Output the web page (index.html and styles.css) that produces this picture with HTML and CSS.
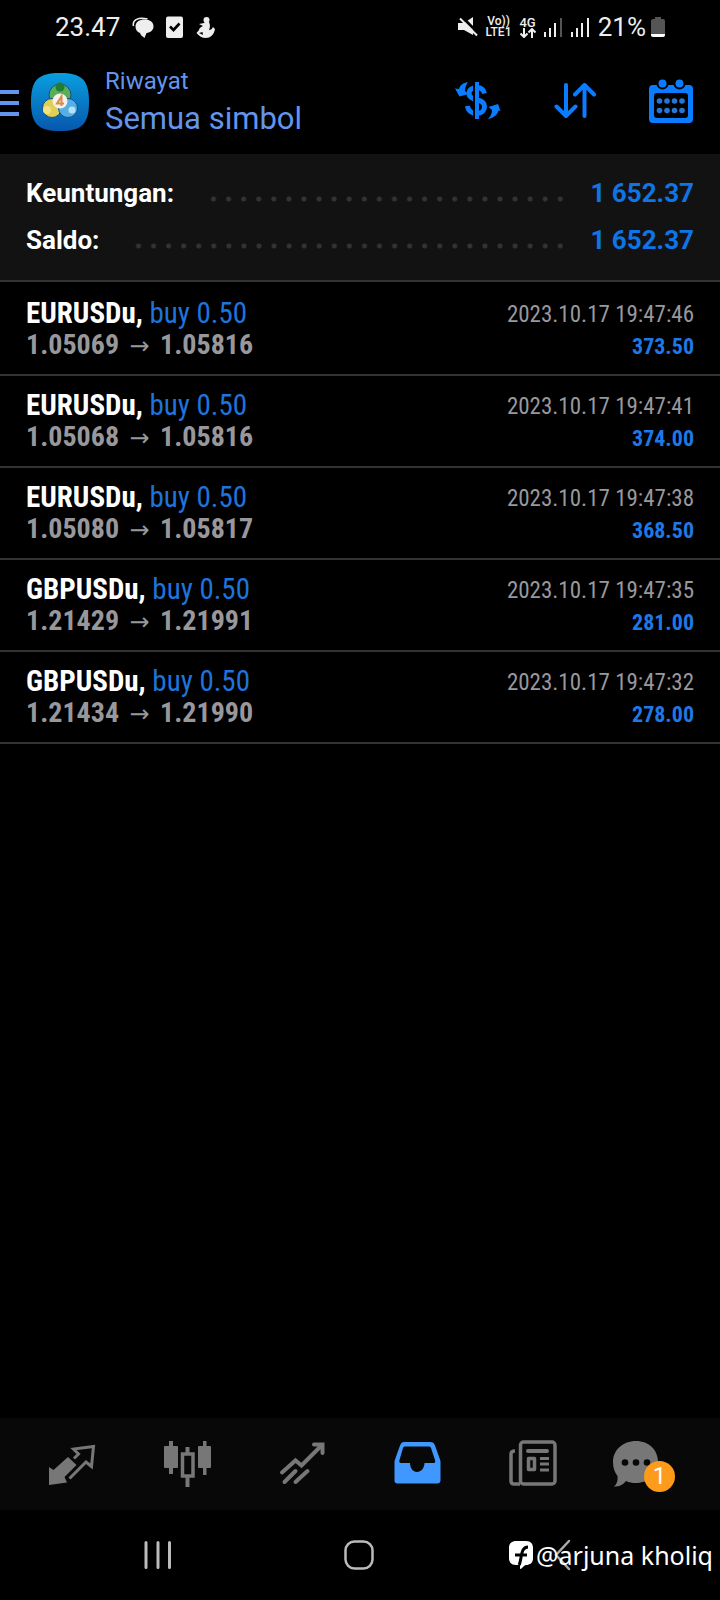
FILE: index.html
```html
<!DOCTYPE html>
<html lang="id">
<head>
<meta charset="utf-8">
<meta name="viewport" content="width=device-width, initial-scale=1">
<title>Riwayat</title>
<link rel="stylesheet" href="styles.css">
</head>
<body>
<div class="screen">
  <div class="status">
    <span class="clock">23.47</span>
    <svg class="status-left" width="84" height="24" viewBox="132 14 84 24" fill="#eee">
      <path d="M144.500 18.500c6 0 9 3 9 7 0 3.500-3 6-7 6.500l-2 5c-2-1.500-4-3-4.500-5-3-1-4.500-3.500-4.500-6.500 0-4.500 4-7 9-7z"/>
      <path d="M133.500 25c-1.500-6 5-9.500 14-7" fill="none" stroke="#eee" stroke-width="1.500"/>
      <rect x="166" y="15.500" width="17" height="21.500" rx="2"/>
      <path d="M170 25.500l3.500 3.500 6-6.500" fill="none" stroke="#000" stroke-width="2.600"/>
      <circle cx="206.500" cy="19" r="3"/>
      <path d="M199 23l5-1 1-1h4c1.500 3 1 6 0 8 2 0 3-1 4-3l2 2c-1 6-5 9-9 9-4 0-7-2-9.500-5l2.500-3c0-2 2-3 4-4z"/>
      <path d="M199 32l3.500-1 .5 3z" fill="#000"/>
    </svg>
    <span class="grow"></span>
    <svg width="20" height="20" viewBox="458 16 20 20" fill="#eee"><path d="M458 22h6l9-6v18l-9-5h-6z"/><path d="M461 15l18 18" stroke="#000" stroke-width="3"/><path d="M460 17.500l17 17" stroke="#eee" stroke-width="2"/></svg>
    <span class="net"><span>Vo))</span><span>LTE1</span></span>
    <span class="net"><span class="gen">4G</span>
      <svg width="16" height="10" viewBox="0 0 16 10" fill="none" stroke="#eee" stroke-width="2"><path d="M4 0v9M.500 5.500L4 9l3.500-3.500M12 10V1M8.500 4.500L12 1l3.500 3.500"/></svg></span>
    <svg width="46" height="20" viewBox="0 0 46 20" stroke="#eee" stroke-width="2"><path d="M1 15v5M6 11v9M11 6v14M28 15v5M33 11v9M38 6v14M44 1v19"/><path d="M17 1v19" stroke="#555"/></svg>
    <span class="battery"><span>21%</span>
      <svg width="14" height="20" viewBox="0 0 14 20"><path d="M4 0h6v2h2q2 0 2 2v13H0V4q0-2 2-2h2z" fill="#555"/><path d="M0 17h14v1q0 2-2 2H2q-2 0-2-2z" fill="#fff"/></svg></span>
  </div>

  <header class="header">
    <button class="menu" aria-label="Menu"><svg width="19" height="28" viewBox="0 0 19 28" fill="#6495ed"><path d="M0 1h19v4H0zM0 12h19v4H0zM0 23h19v4H0z"/></svg></button>
    <svg class="logo" width="60" height="60" viewBox="0 0 60 60">
      <defs>
        <linearGradient id="bg" x1="0" y1="0" x2="0" y2="1"><stop offset="0" stop-color="#0a9fe0"/><stop offset="1" stop-color="#0657ad"/></linearGradient>
      </defs>
      <path d="M30 1C52 1 59 8 59 30S52 59 30 59 1 52 1 30 8 1 30 1z" fill="url(#bg)"/>
      <g stroke="#17507c" stroke-width="1">
        <circle cx="30" cy="23" r="11" fill="#58ad58"/>
        <circle cx="22" cy="36" r="9.500" fill="#e0d055"/>
        <circle cx="38" cy="36" r="9.500" fill="#55aee6"/>
      </g>
      <circle cx="30" cy="15" r="4.500" fill="#237c35"/><circle cx="17" cy="38" r="4" fill="#f0e382"/><circle cx="42" cy="38" r="3.500" fill="#b4e2fb"/>
      <circle cx="30" cy="29" r="7.500" fill="#f5f2ea"/>
      <path d="M31.500 34v-9.500l-4.500 7h7" fill="none" stroke="#dc8a4e" stroke-width="2"/>
    </svg>
    <div class="titles"><h1 class="section">Riwayat</h1><p class="symbol">Semua simbol</p></div>
    <div class="actions">
      <button aria-label="Mata uang"><svg width="46" height="40" viewBox="455 82 46 40">
        <path d="M484.500 94.500c-1-4-4-6-7.500-6-5 0-8 2.500-8 6 0 4 4 5.500 8.500 6.500 5 1 7 3 7 6.500 0 4-3 7-7.500 7-5 0-9-3-9.500-7.500" fill="none" stroke="#0a7cff" stroke-width="5"/>
        <path d="M474 82v39" stroke="#000" stroke-width="2"/>
        <path d="M475 83h4v37h-4z" fill="#0a7cff"/>
        <path d="M468 83c-5 1-8 3-9 7l-4-.5 4.500 8 9-2.500-3.500-3c0-3 1-6 3-9zM488 120c6-1 10-5 10.500-8.500l2 .5-2.500-7-9.500 3 3.500 3c0 3-1 6-4 9z" fill="#0a7cff"/></svg></button>
      <button aria-label="Urutkan"><svg width="42" height="36" viewBox="0 0 42 36" fill="none" stroke="#0a7cff" stroke-width="4" stroke-linecap="round" stroke-linejoin="round"><path d="M12 2v31M2.500 23.500L12 33l9.500-9.500M30.500 33V2M21 11.500L30.500 2 40 11.500"/></svg></button>
      <button aria-label="Kalender"><svg width="44" height="44" viewBox="0 0 44 44"><rect y="6" width="44" height="38" rx="4" fill="#0a7cff"/><rect x="5" y="14" width="34" height="25" rx="3" fill="#000"/><g fill="#0a7cff" stroke="#000" stroke-width="2"><circle cx="13.500" cy="4.500" r="5"/><circle cx="30.500" cy="4.500" r="5"/></g><g fill="#2477d8"><circle cx="10.500" cy="22" r="2.800"/><circle cx="18" cy="22" r="2.800"/><circle cx="25.500" cy="22" r="2.800"/><circle cx="33" cy="22" r="2.800"/><circle cx="10.500" cy="31.500" r="2.800"/><circle cx="18" cy="31.500" r="2.800"/><circle cx="25.500" cy="31.500" r="2.800"/><circle cx="33" cy="31.500" r="2.800"/></g></svg></button>
    </div>
  </header>

  <main class="content">
    <dl class="summary">
      <div class="total"><dt>Keuntungan:</dt><dd><span class="leader"></span>1 652.37</dd></div>
      <div class="total"><dt>Saldo:</dt><dd><span class="leader"></span>1 652.37</dd></div>
    </dl>
    <ul class="deals">
      <li class="deal"><div><p class="name"><b>EURUSDu,</b> <span>buy 0.50</span></p><p class="price">1.05069 <span class="arrow">→</span> 1.05816</p></div><div class="result"><time>2023.10.17 19:47:46</time><p class="profit">373.50</p></div></li>
      <li class="deal"><div><p class="name"><b>EURUSDu,</b> <span>buy 0.50</span></p><p class="price">1.05068 <span class="arrow">→</span> 1.05816</p></div><div class="result"><time>2023.10.17 19:47:41</time><p class="profit">374.00</p></div></li>
      <li class="deal"><div><p class="name"><b>EURUSDu,</b> <span>buy 0.50</span></p><p class="price">1.05080 <span class="arrow">→</span> 1.05817</p></div><div class="result"><time>2023.10.17 19:47:38</time><p class="profit">368.50</p></div></li>
      <li class="deal"><div><p class="name"><b>GBPUSDu,</b> <span>buy 0.50</span></p><p class="price">1.21429 <span class="arrow">→</span> 1.21991</p></div><div class="result"><time>2023.10.17 19:47:35</time><p class="profit">281.00</p></div></li>
      <li class="deal"><div><p class="name"><b>GBPUSDu,</b> <span>buy 0.50</span></p><p class="price">1.21434 <span class="arrow">→</span> 1.21990</p></div><div class="result"><time>2023.10.17 19:47:32</time><p class="profit">278.00</p></div></li>
    </ul>
  </main>

  <nav class="tabs">
    <button aria-label="Kuotasi"><svg width="48" height="48" viewBox="49 1439 48 48"><path d="M69 1456l8.500 8-12 12 2.500 5.500-18 2.500v-18l4.500 3z" fill="#777"/><path d="M75 1457.500l4.500-4.500-5-5 20-2.500-2 20-5.500-4.500-16.500 16.500" fill="none" stroke="#777" stroke-width="3"/></svg></button>
    <button aria-label="Grafik"><svg width="48" height="48" viewBox="163 1440 48 48" fill="#777"><rect x="164" y="1446" width="14" height="22" rx="1"/><rect x="198" y="1446" width="13" height="22" rx="1"/><path d="M169 1441h4v33h-4zM203 1441h3.500v34H203zM185.500 1447h4v7h-4zM185.500 1476h4v11h-4z"/><rect x="182.500" y="1454" width="10.500" height="22" fill="none" stroke="#777" stroke-width="3.500"/></svg></button>
    <button aria-label="Trading"><svg width="48" height="48" viewBox="278 1440 48 48" fill="none" stroke="#777" stroke-width="4" stroke-linecap="round"><path d="M282 1472.500l13.500-12 6 5 20-20M284.500 1482l11-11M295.500 1482l12-11"/><path d="M314 1444.500h8.500v8.500"/></svg></button>
    <button aria-label="Riwayat" aria-current="page"><svg width="48" height="48" viewBox="394 1440 48 48" fill="#3f97ff" fill-rule="evenodd"><path d="M404 1442h26c3 0 4 1 5 3.500l5 14c.5 1 .5 2 .5 3v18c0 2-1.500 3-3 3h-40c-2 0-3-1-3-3v-18c0-1 0-2 .5-3l5-14c1-2.500 2-3.500 4-3.500zM405 1446.500c-1 0-1.500.5-2 1.500l-3.500 12c-.5 2 0 3 1.500 3h9c0 5 3 9 7 9s7.500-4 7.500-9h9c2 0 2-1 1.500-3l-4-12c-.5-1-1-1.500-2-1.500z"/></svg></button>
    <button aria-label="Berita"><svg width="48" height="48" viewBox="509 1440 48 48" fill="none" stroke="#777" stroke-width="3.500" stroke-linejoin="round"><rect x="520.500" y="1442" width="34.500" height="42" rx="3"/><path d="M520 1484h-6c-2 0-3-1-3-3v-27c0-2 1.500-3 4-3"/><path d="M528 1451h19" stroke-width="4" stroke-linecap="round"/><rect x="528.500" y="1458.500" width="6" height="11"/><path d="M540 1458.500h9M540 1464h9M540 1470h9" stroke-width="3"/></svg></button>
    <button class="chat" aria-label="Pesan"><svg width="48" height="48" viewBox="612 1439 48 48"><path d="M636 1440c13 0 22 9 22 21s-9 21-22 21c-4 0-7-.5-10-2-3 4-8 6-12 5.500 3-2.500 4-6 3.500-10.500-3-4-4.500-8-4.500-14 0-12 10-21 23-21z" fill="#777"/><g fill="#080808"><circle cx="625" cy="1461.500" r="3.300"/><circle cx="636" cy="1461.500" r="3.300"/><circle cx="647" cy="1461.500" r="3.300"/></g></svg><span class="badge">1</span></button>
  </nav>

  <div class="system">
    <button aria-label="Terbaru"><svg width="28" height="30" viewBox="0 0 28 30" stroke="#bbb" stroke-width="3" stroke-linecap="round"><path d="M2 2.500v25M14 2.500v25M25.500 2.500v25"/></svg></button>
    <button aria-label="Beranda"><svg width="30" height="30" viewBox="0 0 30 30" fill="none" stroke="#bbb" stroke-width="2.500"><rect x="1.500" y="1.500" width="27" height="27" rx="9"/></svg></button>
    <button aria-label="Kembali"><svg width="30" height="32" viewBox="0 0 30 32" fill="none" stroke="#aaa" stroke-width="2.500" stroke-linecap="round"><path d="M23 2L10 16l13 14"/></svg></button>
    <div class="credit"><svg width="26" height="30" viewBox="0 0 26 30"><path d="M8 1h10c5 0 7 3 7 7v10c0 5-3 7-7 7-2 0-4 4-6 4v-4H8c-5 0-7-3-7-7V8c0-5 3-7 7-7z" fill="#fff"/><path d="M11 25c3-5 1-18 9-18M7 15h12" fill="none" stroke="#000" stroke-width="3"/></svg><span>@arjuna kholiq</span></div>
  </div>
</div>
</body>
</html>
```
FILE: styles.css
```css
* { box-sizing: border-box; }
body { margin: 0; background: #000; color: #fff; font-family: Roboto, "Liberation Sans", sans-serif; }
button { padding: 0; border: 0; background: none; color: inherit; font: inherit; display: flex; }
svg { display: block; flex: none; }
p, h1, dl, dd, ul { margin: 0; padding: 0; font-weight: 400; }
.screen { min-height: 100vh; display: flex; flex-direction: column; }

.status { height: 54px; padding: 0 55px; display: flex; align-items: center; gap: 8px; color: #eee; font-size: 26px; }
.status-left { margin-left: 4px; }
.grow { flex: 1; }
.net { display: flex; flex-direction: column; align-items: center; font-size: 12px; line-height: 11px; font-weight: 500; }
.gen { font-size: 13px; }
.battery { display: flex; align-items: center; gap: 5px; }

.header { height: 100px; padding-right: 27px; display: flex; align-items: center; color: #6495ed; }
.logo { margin: 0 15px 5px 11px; }
.menu { margin-bottom: 3px; }
.titles { margin-bottom: 6px; }
.section { font-size: 24px; line-height: 36px; }
.symbol { font-size: 31px; line-height: 40px; }
.actions { margin: 0 0 6px auto; display: flex; align-items: center; gap: 53px; }

.content { flex: 1; }
.summary { padding: 16px 26px; background: #121212; border-bottom: 2px solid #333; font-size: 26px; line-height: 47px; font-weight: 700; }
.total { display: flex; }
.total dd { flex: 1; display: flex; color: #0f75e6; font-weight: 700; }
.leader { flex: 1; height: 6px; margin: 26px 22px 0 32px; background: radial-gradient(circle, #333 2px, transparent 3px) 0 0 / 15px 6px; background-repeat: space no-repeat; }

.deals { padding-top: 2px; list-style: none; font-family: "Roboto Condensed", Roboto, sans-serif; }
.deal { padding: 13px 26px 11px; display: flex; justify-content: space-between; border-bottom: 2px solid #333; line-height: 32px; }
.name { font-size: 29px; }
.name span { color: #1e74dc; }
.price { color: #98989c; font-size: 28px; font-weight: 700; }
.arrow { margin: 0 4px; font-family: "DejaVu Sans", sans-serif; font-size: 24px; font-weight: 400; line-height: 24px; }
.result { padding-top: 2px; display: flex; flex-direction: column; text-align: right; font-size: 22px; }
.result time { color: #98989c; font-size: 23px; }
.profit { color: #1e78e6; font-weight: 700; }

.tabs { height: 92px; padding: 0 48px; display: flex; align-items: center; justify-content: space-between; background: #080808; }
.chat { position: relative; margin: 0 12px 0 -12px; }
.badge { position: absolute; right: -15px; bottom: -4px; width: 31px; height: 31px; border-radius: 50%; background: #ff9b1a; font-size: 24px; line-height: 31px; text-align: center; }

.system { position: relative; height: 90px; padding: 0 144px; display: flex; align-items: center; justify-content: space-between; }
.credit { position: absolute; right: 7px; top: 26px; display: flex; align-items: center; gap: 2px; font-family: "Noto Sans", sans-serif; font-size: 25px; line-height: 38px; }
```
